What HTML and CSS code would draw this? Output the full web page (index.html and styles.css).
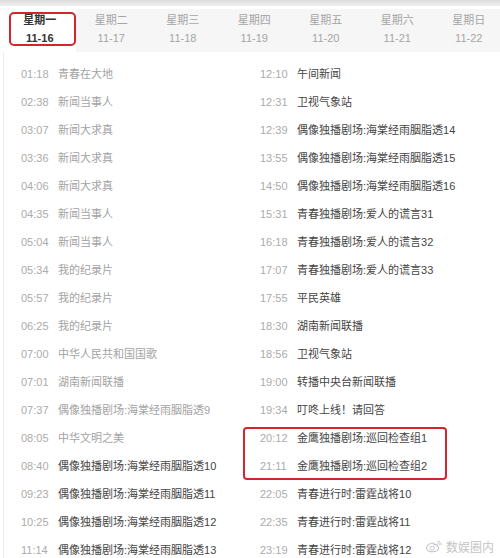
FILE: index.html
```html
<!DOCTYPE html>
<html lang="zh">
<head>
<meta charset="utf-8">
<link rel="stylesheet" href="styles.css">
</head>
<body>
<div class="page">
  <div class="topbar"></div>
  <div class="tabs">
    <div class="tab active"><span class="wd">星期一</span><span class="dt">11-16</span></div>
    <div class="tab"><span class="wd">星期二</span><span class="dt">11-17</span></div>
    <div class="tab"><span class="wd">星期三</span><span class="dt">11-18</span></div>
    <div class="tab"><span class="wd">星期四</span><span class="dt">11-19</span></div>
    <div class="tab"><span class="wd">星期五</span><span class="dt">11-20</span></div>
    <div class="tab"><span class="wd">星期六</span><span class="dt">11-21</span></div>
    <div class="tab"><span class="wd">星期日</span><span class="dt">11-22</span></div>
    <div class="mark mark-tab"></div>
  </div>
  <div class="list">
    <div class="col">
      <div class="row past"><span class="t">01:18</span><span class="n">青春在大地</span></div>
      <div class="row past"><span class="t">02:38</span><span class="n">新闻当事人</span></div>
      <div class="row past"><span class="t">03:07</span><span class="n">新闻大求真</span></div>
      <div class="row past"><span class="t">03:36</span><span class="n">新闻大求真</span></div>
      <div class="row past"><span class="t">04:06</span><span class="n">新闻大求真</span></div>
      <div class="row past"><span class="t">04:35</span><span class="n">新闻当事人</span></div>
      <div class="row past"><span class="t">05:04</span><span class="n">新闻当事人</span></div>
      <div class="row past"><span class="t">05:34</span><span class="n">我的纪录片</span></div>
      <div class="row past"><span class="t">05:57</span><span class="n">我的纪录片</span></div>
      <div class="row past"><span class="t">06:25</span><span class="n">我的纪录片</span></div>
      <div class="row past"><span class="t">07:00</span><span class="n">中华人民共和国国歌</span></div>
      <div class="row past"><span class="t">07:01</span><span class="n">湖南新闻联播</span></div>
      <div class="row past"><span class="t">07:37</span><span class="n">偶像独播剧场:海棠经雨胭脂透9</span></div>
      <div class="row past"><span class="t">08:05</span><span class="n">中华文明之美</span></div>
      <div class="row"><span class="t">08:40</span><span class="n">偶像独播剧场:海棠经雨胭脂透10</span></div>
      <div class="row"><span class="t">09:23</span><span class="n">偶像独播剧场:海棠经雨胭脂透11</span></div>
      <div class="row"><span class="t">10:25</span><span class="n">偶像独播剧场:海棠经雨胭脂透12</span></div>
      <div class="row"><span class="t">11:14</span><span class="n">偶像独播剧场:海棠经雨胭脂透13</span></div>
    </div>
    <div class="col">
      <div class="row"><span class="t">12:10</span><span class="n">午间新闻</span></div>
      <div class="row"><span class="t">12:31</span><span class="n">卫视气象站</span></div>
      <div class="row"><span class="t">12:39</span><span class="n">偶像独播剧场:海棠经雨胭脂透14</span></div>
      <div class="row"><span class="t">13:55</span><span class="n">偶像独播剧场:海棠经雨胭脂透15</span></div>
      <div class="row"><span class="t">14:50</span><span class="n">偶像独播剧场:海棠经雨胭脂透16</span></div>
      <div class="row"><span class="t">15:31</span><span class="n">青春独播剧场:爱人的谎言31</span></div>
      <div class="row"><span class="t">16:18</span><span class="n">青春独播剧场:爱人的谎言32</span></div>
      <div class="row"><span class="t">17:07</span><span class="n">青春独播剧场:爱人的谎言33</span></div>
      <div class="row"><span class="t">17:55</span><span class="n">平民英雄</span></div>
      <div class="row"><span class="t">18:30</span><span class="n">湖南新闻联播</span></div>
      <div class="row"><span class="t">18:56</span><span class="n">卫视气象站</span></div>
      <div class="row"><span class="t">19:00</span><span class="n">转播中央台新闻联播</span></div>
      <div class="row"><span class="t">19:34</span><span class="n">叮咚上线！请回答</span></div>
      <div class="row"><span class="t">20:12</span><span class="n">金鹰独播剧场:巡回检查组1</span></div>
      <div class="row"><span class="t">21:11</span><span class="n">金鹰独播剧场:巡回检查组2</span></div>
      <div class="row"><span class="t">22:05</span><span class="n">青春进行时:雷霆战将10</span></div>
      <div class="row"><span class="t">22:35</span><span class="n">青春进行时:雷霆战将11</span></div>
      <div class="row"><span class="t">23:19</span><span class="n">青春进行时:雷霆战将12</span></div>
    </div>
    <div class="mark mark-rows"></div>
  </div>
  <div class="watermark">
    <svg class="wb" viewBox="0 0 20 16" width="18" height="15">
      <path d="M8.5 4.2c-3.3 0-6.8 2.6-6.8 5.4 0 2.5 2.9 4.3 6.6 4.3 4.2 0 7-2.2 7-4.1 0-1.4-1.3-1.8-1.9-2 .5-.9.5-1.8-.6-2.1-.8-.2-2.2.2-2.6.4.3-.9.1-1.9-1.7-1.9z" fill="none" stroke="#c4c4c4" stroke-width="1.2"/>
      <ellipse cx="8" cy="10" rx="2.6" ry="2" fill="none" stroke="#c4c4c4" stroke-width="1"/>
      <path d="M14 2.2a4 4 0 0 1 4 4.4M14 4.2a2 2 0 0 1 2 2.3" fill="none" stroke="#c4c4c4" stroke-width="1.1"/>
    </svg>
    <span class="wt">数娱圈内</span>
  </div>
</div>
</body>
</html>
```
FILE: styles.css
```css
html, body {
  margin: 0;
  padding: 0;
  background: #fff;
}
.page {
  position: relative;
  width: 500px;
  height: 558px;
  overflow: hidden;
  font-family: "Liberation Sans", "Noto Sans CJK SC", sans-serif;
}
.topbar {
  height: 6px;
  background: linear-gradient(#dcdcdc, #efefef);
}
.tabs {
  position: relative;
  display: flex;
  margin-top: 3px;
  padding-left: 4px;
  height: 43px;
}
.tab {
  flex: 0 0 71.5px;
  display: flex;
  flex-direction: column;
  align-items: center;
  padding-top: 2px;
  background: #f6f6f6;
  color: #a5a5a5;
  font-size: 11px;
  line-height: 18px;
}
.tab.active {
  background: #fff;
  color: #333;
  font-weight: bold;
}
.mark {
  position: absolute;
  box-sizing: border-box;
  border: 2px solid #d4262a;
  border-radius: 4px;
}
.mark-tab {
  left: 9px;
  top: 3px;
  width: 67px;
  height: 34px;
  border-width: 2.5px;
  border-radius: 5px;
}
.list {
  position: relative;
  display: grid;
  grid-template-columns: 239px 1fr;
  margin-left: 3px;
  border-left: 1px solid #ececec;
  padding-top: 8px;
}
.row {
  display: flex;
  height: 28px;
  line-height: 28px;
  font-size: 11px;
  padding-left: 17px;
  white-space: nowrap;
}
.t {
  width: 37px;
  color: #ababab;
}
.n {
  color: #444;
}
.past .n {
  color: #a3a3a3;
}
.mark-rows {
  left: 239px;
  top: 375px;
  width: 204px;
  height: 53px;
}
.watermark {
  position: absolute;
  right: 6px;
  bottom: 3px;
  display: flex;
  align-items: center;
  gap: 3px;
  color: #c4c4c4;
  font-size: 12px;
  font-family: "Noto Sans CJK SC", sans-serif;
}
```
